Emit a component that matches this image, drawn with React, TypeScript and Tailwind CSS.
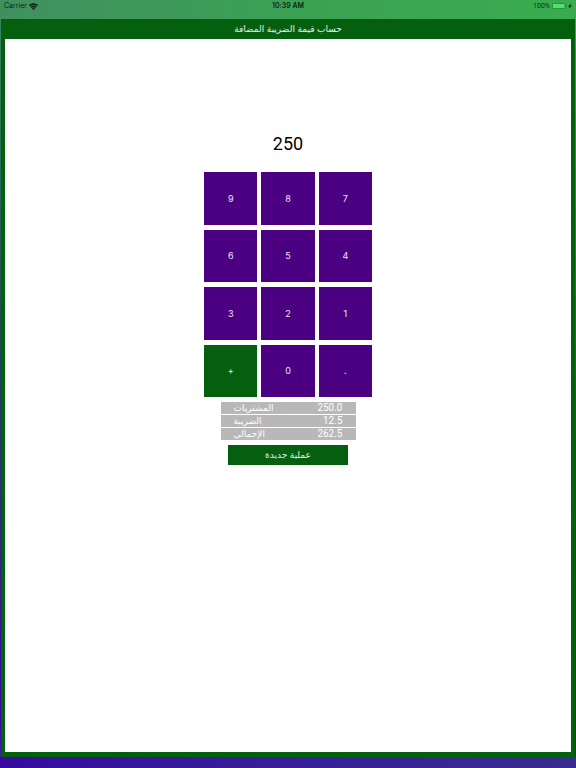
import React, { useState } from 'react';

const KEYS = ['7', '8', '9', '4', '5', '6', '1', '2', '3', '.', '0', '+'];
const TAX_RATE = 0.05;

function StatusBar() {
  return (
    <div className="grid h-[19px] grid-cols-3 items-start px-1 pt-[2px] text-[7px] leading-[8px] text-black/80">
      <div className="flex items-center gap-[2px]">
        <span>Carrier</span>
        <svg width="9" height="7" viewBox="0 0 16 12" fill="none" stroke="currentColor" strokeWidth="3" aria-hidden="true">
          <path d="M1 4.6a10 10 0 0 1 14 0" />
          <path d="M3.7 7.8a6.1 6.1 0 0 1 8.6 0" />
          <path d="M8 12 5.4 9.4a3.6 3.6 0 0 1 5.2 0z" fill="currentColor" stroke="none" />
        </svg>
      </div>
      <span className="text-center font-semibold">10:39 AM</span>
      <div className="flex items-center justify-end gap-px">
        <span className="mr-px font-[Roboto,sans-serif]">100%</span>
        <svg width="15" height="6" viewBox="0 0 15 6" aria-hidden="true">
          <rect x="0.4" y="0.4" width="12.6" height="5.2" rx="1.2" fill="#4fe070" stroke="#23702f" strokeWidth="0.7" />
          <path d="M13.7 2v2q.9-.3.9-1t-.9-1z" fill="#23702f" />
        </svg>
        <svg width="4" height="6" viewBox="0 0 4 6" fill="currentColor" aria-hidden="true">
          <path d="M2.8.4.1 3.5h1.3l-.4 2.2 2.9-3.3H2.4z" />
        </svg>
      </div>
    </div>
  );
}

function App() {
  const [display, setDisplay] = useState('250');
  const [purchases, setPurchases] = useState(250);

  const tax = purchases * TAX_RATE;
  const totals = [
    { label: 'المشتريات', value: purchases },
    { label: 'الضريبة', value: tax },
    { label: 'الإجمالي', value: purchases + tax },
  ];

  const handleKey = (key: string) => {
    if (key === '+') {
      setPurchases(purchases + Number(display));
      setDisplay('0');
      return;
    }
    if (key === '.' && display.includes('.')) return;
    setDisplay(display === '0' && key !== '.' ? key : display + key);
  };

  const reset = () => {
    setDisplay('0');
    setPurchases(0);
  };

  return (
    <div className="flex min-h-screen flex-col bg-[linear-gradient(190deg,#3aad4f_0%,#3f8f60_8%,#1c4a50_50%,#3708a0_94%,#382890_100%)] font-[Inter,'DejaVu_Sans',sans-serif]">
      <div className="bg-linear-to-r from-[#40905f] via-[#3ba154] to-[#3aac4e]">
        <StatusBar />
      </div>

      <div className="mx-px flex grow flex-col bg-[#04600f] px-1 pb-[5px]">
        <header className="flex h-5 items-center justify-center">
          <h1 dir="rtl" className="text-[9px] text-white/90">حساب قيمة الضريبة المضافة</h1>
        </header>

        <main className="flex grow flex-col items-center bg-white pt-[93px]">
          <output className="font-[Roboto,sans-serif] text-[18px] leading-6 text-black">{display}</output>

          <div dir="rtl" className="mt-4 grid h-[225px] w-[168px] grid-cols-3 grid-rows-4 gap-x-1 gap-y-[5px]">
            {KEYS.map((key) => (
              <button
                key={key}
                type="button"
                onClick={() => handleKey(key)}
                className={`text-[9px] text-white/90 ${key === '+' ? 'bg-[#04600f]' : 'bg-[#4b0082]'}`}
              >
                {key}
              </button>
            ))}
          </div>

          <table className="mt-1 w-[135px] border-separate border-spacing-x-0 border-spacing-y-px leading-3 text-white">
            <tbody>
              {totals.map(({ label, value }) => (
                <tr key={label} className="h-3 bg-[#b8b8b8]">
                  <th scope="row" className="p-0 pl-[13px] text-left text-[9px] leading-3 font-normal">{label}</th>
                  <td className="p-0 pr-[13px] text-right font-[Roboto,sans-serif] text-[10px] leading-3">{value.toFixed(1)}</td>
                </tr>
              ))}
            </tbody>
          </table>

          <button type="button" dir="rtl" onClick={reset} className="mt-1 h-5 w-[120px] bg-[#04600f] text-[9px] text-white/90">
            عملية جديدة
          </button>
        </main>
      </div>

      <footer className="h-[11px] bg-linear-to-r from-[#3708a0] to-[#382a8e]" />
    </div>
  );
}

export default App;
